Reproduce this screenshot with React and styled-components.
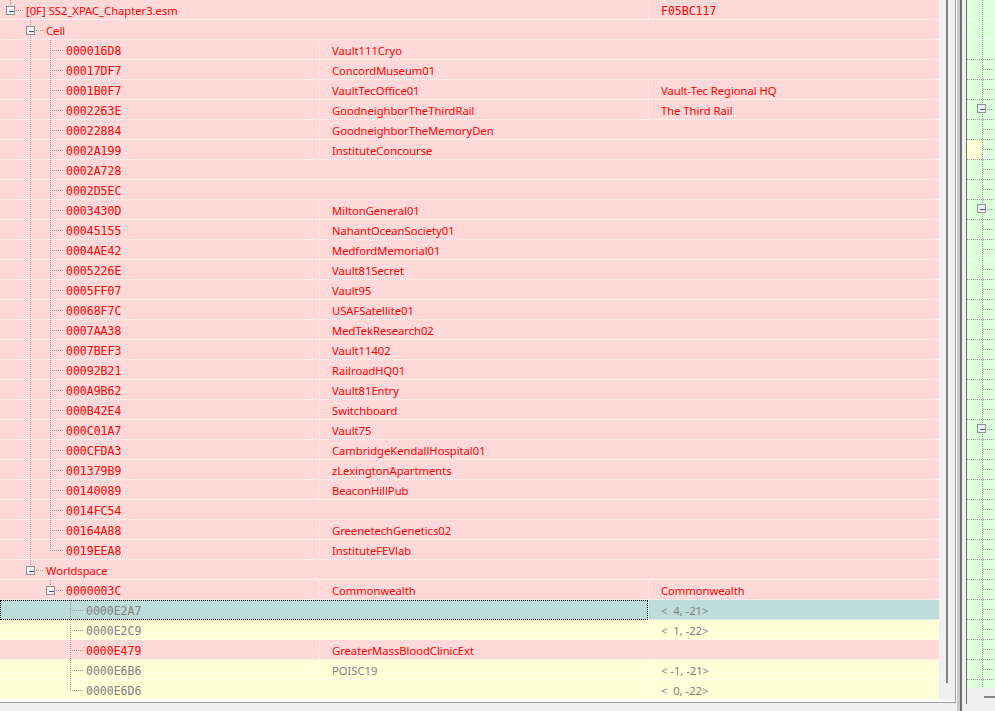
import React from "react";
import styled, { createGlobalStyle, css } from "styled-components";

const MONO = `"DejaVu Sans Mono", "Liberation Mono", monospace`;
const SANS = `"Noto Sans", "Open Sans", sans-serif`;

const BG = { pink: "#ffd8d8", yellow: "#ffffd8", sel: "#bfddd8" };
const FG = { red: "#ff0000", gray: "#808080" };
const LINE = "#9a9a9a";

const COLS = [319, 329, 291];
const TREE_W = 939;

const dotsH = (c) =>
  `repeating-linear-gradient(to right, ${c} 0 1px, transparent 1px 2px)`;
const dotsV = (c) =>
  `repeating-linear-gradient(to bottom, ${c} 0 1px, transparent 1px 2px)`;

const GlobalStyle = createGlobalStyle`
  html, body {
    margin: 0;
    padding: 0;
    background: #f0f0f0;
    width: 995px;
    height: 711px;
    overflow: hidden;
  }
  body {
    font-family: ${SANS};
  }
`;

const Window = styled.div`
  display: flex;
  align-items: flex-start;
  width: 995px;
  height: 711px;
  background: #f0f0f0;
`;

const TreePanel = styled.div`
  display: flex;
  flex-direction: column;
  flex: none;
  width: 956px;
  height: 703px;
  box-sizing: border-box;
  border-right: 1px solid #a0a0a0;
  border-bottom: 1px solid #a0a0a0;
`;

const TreeBody = styled.div`
  display: flex;
  height: 700px;
`;

const Rows = styled.div`
  display: flex;
  flex-direction: column;
  width: ${TREE_W}px;
  flex: none;
`;

const VScroll = styled.div`
  flex: 1;
  background: #f0f0f0;
`;

const VThumb = styled.div`
  width: 2px;
  height: 683px;
  margin-left: 7px;
  background: #858585;
`;

const BottomStrip = styled.div`
  height: 2px;
  background: #f8f8f8;
`;

const Row = styled.div`
  display: flex;
  height: 20px;
  background-color: ${(p) => BG[p.$kind]};
  background-image: ${dotsH("#fff")};
  background-size: 100% 1px;
  background-position: left bottom;
  background-repeat: no-repeat;
  color: ${(p) => FG[p.$tone]};
`;

const NameCell = styled.div`
  position: relative;
  display: flex;
  flex: none;
  width: ${(p) => p.$w}px;
  ${(p) =>
    p.$focus &&
    css`
      &::after {
        content: "";
        position: absolute;
        inset: 0;
        border: 1px dotted #000;
        pointer-events: none;
      }
    `}
`;

const Seg = styled.svg`
  display: block;
  flex: none;
`;

const Label = styled.span`
  margin-left: 2px;
  padding-top: 1px;
  font-family: ${(p) => (p.$mono ? MONO : SANS)};
  font-size: ${(p) => (p.$mono ? "11.5px" : "11.2px")};
  line-height: 20px;
  white-space: pre;
`;

const Col = styled.div`
  flex: none;
  width: ${(p) => p.$w}px;
  box-sizing: border-box;
  padding: 1px 0 0 13px;
  background-image: ${dotsV("#fff")};
  background-size: 1px 100%;
  background-repeat: no-repeat;
  font-family: ${(p) => (p.$mono ? MONO : SANS)};
  font-size: ${(p) => (p.$mono ? "11.5px" : "11.2px")};
  line-height: 20px;
  white-space: pre;
  overflow: hidden;
`;

const Splitter = styled.div`
  flex: none;
  width: 10px;
  height: 711px;
  background: linear-gradient(
    to right,
    #ffffff 0 1px,
    #c8c8c8 1px 4px,
    #6d6d6d 4px 6px,
    #f0f0f0 6px 10px
  );
`;

const RightPanel = styled.div`
  display: flex;
  flex-direction: column;
  flex: none;
  width: 29px;
  height: 704px;
  box-sizing: border-box;
  border-left: 1px solid #6e6e6e;
`;

const RightTree = styled.div`
  height: 688px;
  overflow: hidden;
  background: #dcffdc;
`;

const HScroll = styled.div`
  flex: 1;
  background: #f0f0f0;
  padding-top: 8px;
`;

const HThumb = styled.div`
  height: 2px;
  margin-left: 17px;
  background: #858585;
`;

// ---- data ----

const cells = [
  ["000016D8", "Vault111Cryo", ""],
  ["00017DF7", "ConcordMuseum01", ""],
  ["0001B0F7", "VaultTecOffice01", "Vault-Tec Regional HQ"],
  ["0002263E", "GoodneighborTheThirdRail", "The Third Rail"],
  ["00022884", "GoodneighborTheMemoryDen", ""],
  ["0002A199", "InstituteConcourse", ""],
  ["0002A728", "", ""],
  ["0002D5EC", "", ""],
  ["0003430D", "MiltonGeneral01", ""],
  ["00045155", "NahantOceanSociety01", ""],
  ["0004AE42", "MedfordMemorial01", ""],
  ["0005226E", "Vault81Secret", ""],
  ["0005FF07", "Vault95", ""],
  ["00068F7C", "USAFSatellite01", ""],
  ["0007AA38", "MedTekResearch02", ""],
  ["0007BEF3", "Vault11402", ""],
  ["00092B21", "RailroadHQ01", ""],
  ["000A9B62", "Vault81Entry", ""],
  ["000B42E4", "Switchboard", ""],
  ["000C01A7", "Vault75", ""],
  ["000CFDA3", "CambridgeKendallHospital01", ""],
  ["001379B9", "zLexingtonApartments", ""],
  ["00140089", "BeaconHillPub", ""],
  ["0014FC54", "", ""],
  ["00164A88", "GreenetechGenetics02", ""],
  ["0019EEA8", "InstituteFEVlab", ""],
];

const worldChildren = [
  ["0000E2A7", "", "<  4, -21>", "sel", "gray"],
  ["0000E2C9", "", "<  1, -22>", "yellow", "gray"],
  ["0000E479", "GreaterMassBloodClinicExt", "", "pink", "red"],
  ["0000E6B6", "POISC19", "< -1, -21>", "yellow", "gray"],
  ["0000E6D6", "", "<  0, -22>", "yellow", "gray"],
];

const rows = [
  {
    level: 0, anc: [], box: true, last: true,
    name: "[0F] SS2_XPAC_Chapter3.esm", c3: "F05BC117", c3Mono: true,
  },
  { level: 1, anc: [false], box: true, last: false, name: "Cell" },
  ...cells.map(([id, edid, full], i) => ({
    level: 2, anc: [false, true], last: i === cells.length - 1,
    name: id, mono: true, c2: edid, c3: full,
  })),
  { level: 1, anc: [false], box: true, last: true, name: "Worldspace" },
  {
    level: 2, anc: [false, false], box: true, last: true,
    name: "0000003C", mono: true, c2: "Commonwealth", c3: "Commonwealth",
  },
  ...worldChildren.map(([id, edid, c3, kind, tone], i) => ({
    level: 3, anc: [false, false, false], last: i === worldChildren.length - 1,
    name: id, mono: true, c2: edid, c3, kind, tone, focus: kind === "sel",
  })),
];

const rightRows = Array.from({ length: 35 }, (_, i) => ({
  sep: [0, 1, 12].includes(i) ? "#ffffff" : LINE,
  branch: i >= 3,
  box: [5, 10, 21].includes(i),
  yellow: i === 7,
}));

// ---- pieces ----

function Expander({ cx, cy }) {
  return (
    <g>
      <rect
        x={cx - 4.5}
        y={cy - 4.5}
        width="8"
        height="8"
        fill="#f3f3f3"
        stroke="#8f8f8f"
      />
      <line
        x1={cx - 2}
        y1={cy + 0.5}
        x2={cx + 3}
        y2={cy + 0.5}
        stroke="#3d5597"
      />
    </g>
  );
}

function Dotted(props) {
  return (
    <line
      stroke={LINE}
      strokeDasharray="1 1"
      shapeRendering="crispEdges"
      {...props}
    />
  );
}

function Connector({ row }) {
  const segs = [];
  for (let k = 0; k < row.level; k++) {
    segs.push(
      <Seg key={k} width="20" height="20">
        {row.anc[k] && <Dotted x1="10.5" y1="0" x2="10.5" y2="20" />}
      </Seg>
    );
  }
  segs.push(
    <Seg key="own" width="24" height="20">
      <Dotted x1="10.5" y1="0" x2="10.5" y2={row.last ? 11 : 20} />
      <Dotted x1={row.box ? 16 : 12} y1="10.5" x2="24" y2="10.5" />
      {row.box && <Expander cx={11} cy={11} />}
    </Seg>
  );
  return segs;
}

function TreeRow({ row }) {
  const has2 = !!row.c2;
  const has3 = !!row.c3;
  let nameW = TREE_W;
  if (has2) nameW = COLS[0];
  else if (has3) nameW = COLS[0] + COLS[1];
  const c2W = has3 ? COLS[1] : TREE_W - COLS[0];

  return (
    <Row $kind={row.kind || "pink"} $tone={row.tone || "red"}>
      <NameCell $w={nameW} $focus={row.focus}>
        <Connector row={row} />
        <Label $mono={row.mono}>{row.name}</Label>
      </NameCell>
      {has2 && <Col $w={c2W}>{row.c2}</Col>}
      {has3 && (
        <Col $w={COLS[2]} $mono={row.c3Mono}>
          {row.c3}
        </Col>
      )}
    </Row>
  );
}

function RightRow({ r }) {
  return (
    <Seg width="28" height="20">
      {r.yellow && <rect x="0" y="0" width="15" height="20" fill="#ffffd8" />}
      <line
        x1="0"
        y1="19.5"
        x2="28"
        y2="19.5"
        stroke={r.sep}
        strokeDasharray="1 1"
        shapeRendering="crispEdges"
      />
      <Dotted x1="15.5" y1="0" x2="15.5" y2="20" />
      {r.branch && (
        <Dotted x1={r.box ? 20 : 16} y1="9.5" x2="28" y2="9.5" />
      )}
      {r.box && <Expander cx={15} cy={9} />}
    </Seg>
  );
}

const App = () => {
  return (
    <>
      <GlobalStyle />
      <Window>
        <TreePanel>
          <TreeBody>
            <Rows>
              {rows.map((row, i) => (
                <TreeRow key={i} row={row} />
              ))}
            </Rows>
            <VScroll>
              <VThumb />
            </VScroll>
          </TreeBody>
          <BottomStrip />
        </TreePanel>
        <Splitter />
        <RightPanel>
          <RightTree>
            {rightRows.map((r, i) => (
              <RightRow key={i} r={r} />
            ))}
          </RightTree>
          <HScroll>
            <HThumb />
          </HScroll>
        </RightPanel>
      </Window>
    </>
  );
};

export default App;
